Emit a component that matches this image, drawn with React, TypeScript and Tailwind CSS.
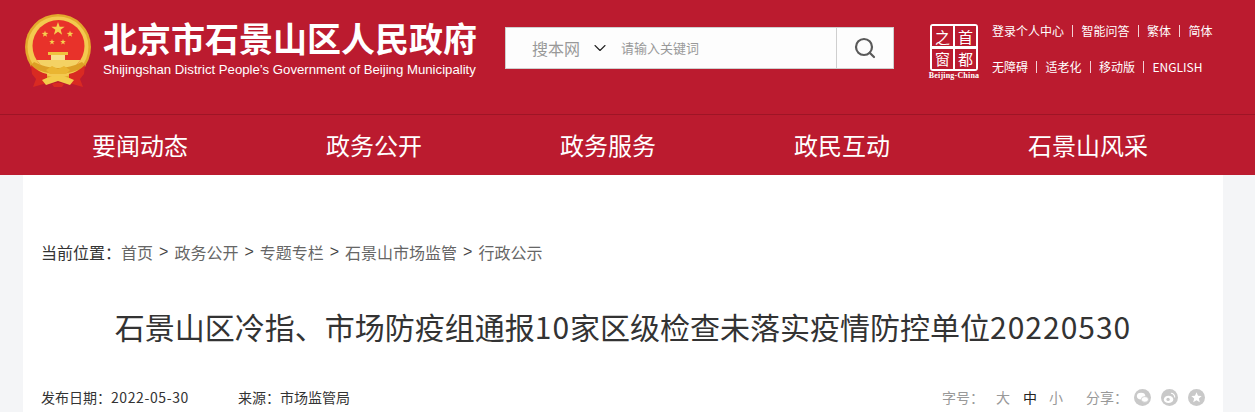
import { ChevronDown, Search } from "lucide-react";

const cjk = { fontFamily: '"Microsoft YaHei", "Noto Sans CJK SC", "Liberation Sans", sans-serif' };

const navItems = ["要闻动态", "政务公开", "政务服务", "政民互动", "石景山风采"];
const crumbs = ["首页", "政务公开", "专题专栏", "石景山市场监管", "行政公示"];

function Star({ x, y, r }: { x: number; y: number; r: number }) {
  const pts = [...Array(10)]
    .map((_, i) => {
      const a = (Math.PI / 5) * i - Math.PI / 2;
      const d = i % 2 === 0 ? r : r * 0.4;
      return `${x + d * Math.cos(a)},${y + d * Math.sin(a)}`;
    })
    .join(" ");
  return <polygon points={pts} fill="#f6cf4e" />;
}

function Emblem() {
  return (
    <svg width="68" height="74" viewBox="0 0 68 74" className="shrink-0">
      <defs>
        <clipPath id="inner">
          <circle cx="34.5" cy="32" r="26" />
        </clipPath>
      </defs>
      <circle cx="34" cy="33" r="33" fill="#e3a92c" />
      <circle cx="34" cy="33" r="30.5" fill="#f3c94f" />
      <circle cx="34.5" cy="32" r="26" fill="#e8322a" />
      <Star x={34} y={15} r={7} />
      <Star x={21} y={20} r={3.5} />
      <Star x={46} y={20} r={3.5} />
      <Star x={28} y={28} r={3} />
      <Star x={39} y={28} r={3} />
      <g clipPath="url(#inner)">
        <rect x="0" y="46" width="68" height="20" fill="#f4d264" />
      </g>
      <rect x="24" y="38" width="20" height="3" fill="#f0c33f" />
      <rect x="27" y="41" width="14" height="5" fill="#f8e08c" />
      <path d="M10 48 Q34 60 58 48 L62 52 Q34 68 6 52 Z" fill="#dd9f25" />
      <path d="M7 51 Q14 58 23 60 L23 69 L9 73 L12 65 L8 60 Z" fill="#d92a22" />
      <path d="M61 51 Q54 58 45 60 L45 69 L59 73 L56 65 L60 60 Z" fill="#d92a22" />
      <path d="M22 56 L28 52 L34 55 L40 52 L46 56 L42 60 L26 60 Z" fill="#eab531" />
      <path d="M18 66 Q34 58 50 66 L46 71 L34 67 L22 71 Z" fill="#f3cb4b" />
      <path d="M28 70 Q34 67 40 70 L38 73 L30 73 Z" fill="#d92a22" />
    </svg>
  );
}

function BeijingLogo() {
  const cell = "flex h-[20px] items-center justify-center overflow-hidden bg-[#bb1b2f] text-[15px] leading-[15px] text-white";
  return (
    <div className="flex w-[54px] shrink-0 flex-col items-center">
      <div className="grid h-[47px] w-[48px] grid-cols-2 grid-rows-2 gap-[2px] rounded-[3px] border-[2px] border-white bg-white">
        <div className={cell}>之</div>
        <div className={cell}>首</div>
        <div className={cell}>窗</div>
        <div className={cell}>都</div>
      </div>
      <div className="whitespace-nowrap text-[8px] font-bold leading-[10px] tracking-[0.2px] text-white" style={{ fontFamily: '"Liberation Serif", serif' }}>
        Beijing-China
      </div>
    </div>
  );
}

function TopLinks({ items }: { items: string[] }) {
  return (
    <div className="flex items-center text-[12px] leading-[16px] text-white">
      {items.map((item, i) => (
        <div key={item} className="flex items-center">
          {i > 0 && <span className="mx-[8.25px] h-[12px] w-px bg-[#f3cfd4]" />}
          <span>{item}</span>
        </div>
      ))}
    </div>
  );
}

export default function App() {
  return (
    <div className="h-[412px] w-[1255px] overflow-hidden bg-[#f4f5f7]" style={cjk}>
      <header className="flex h-[115px] items-start border-b border-[#9e1526] bg-[#bb1b2f]">
        <div className="ml-[24px] mt-[14px]">
          <Emblem />
        </div>
        <div className="ml-[11px] mt-[14px] w-[390px] text-white">
          <div className="whitespace-nowrap text-[34px] font-bold leading-[48px]">北京市石景山区人民政府</div>
          <div className="whitespace-nowrap text-[13.2px] leading-[16px]" style={{ fontFamily: '"Liberation Sans", sans-serif' }}>
            Shijingshan District People’s Government of Beijing Municipality
          </div>
        </div>
        <div className="ml-[12px] mt-[27px] flex h-[42px] w-[389px] border border-[#cfcfcf] bg-[#fdfdfd]">
          <div className="flex flex-1 items-center">
            <span className="ml-[26px] text-[16px] text-[#999999]">搜本网</span>
            <ChevronDown className="ml-[10px] h-[20px] w-[20px] text-[#222222]" strokeWidth={1.3} />
            <span className="ml-[11px] text-[13px] text-[#999999]">请输入关键词</span>
          </div>
          <div className="flex w-[57px] items-center justify-center border-l border-[#cfcfcf]">
            <Search className="h-[24px] w-[24px] text-[#5a5a5a]" strokeWidth={2.2} />
          </div>
        </div>
        <div className="ml-[33px] mt-[24px]">
          <BeijingLogo />
        </div>
        <div className="ml-[11px] mt-[23px] flex flex-col gap-[20px]">
          <TopLinks items={["登录个人中心", "智能问答", "繁体", "简体"]} />
          <TopLinks items={["无障碍", "适老化", "移动版", "ENGLISH"]} />
        </div>
      </header>

      <nav className="flex h-[60px] items-center bg-[#bb1b2f] pl-[23px]">
        {navItems.map((item) => (
          <div key={item} className="w-[234px] whitespace-nowrap pl-[69px] text-[24px] leading-[32px] text-white">
            {item}
          </div>
        ))}
      </nav>

      <main className="ml-[23px] h-[237px] w-[1200px] bg-white px-[18px] pt-[66px]">
        <div className="flex items-center text-[16px] leading-[22px] text-[#666666]">
          <span className="text-[#333333]">当前位置：</span>
          {crumbs.map((c, i) => (
            <div key={c} className="flex items-center">
              {i > 0 && <span className="mx-[6px] text-[#444444]" style={{ fontFamily: '"Liberation Sans", sans-serif' }}>&gt;</span>}
              <span>{c}</span>
            </div>
          ))}
        </div>
        <h1 className="mt-[41px] whitespace-nowrap text-center text-[30px] font-normal leading-[44px] text-[#333333]">
          石景山区冷指、市场防疫组通报<span className="tracking-[1px]">10</span>家区级检查未落实疫情防控单位<span className="tracking-[1px]">20220530</span>
        </h1>
        <div className="mt-[39px] flex items-center text-[14px] leading-[20px] text-[#333333]">
          <span>
            发布日期：<span className="tracking-[0.6px]">2022-05-30</span>
          </span>
          <span className="ml-[49px]">来源：市场监管局</span>
          <div className="ml-auto flex items-center text-[#999999]">
            <span>字号：</span>
            <span className="ml-[12px]">大</span>
            <span className="ml-[13px] text-[#222222]">中</span>
            <span className="ml-[12px]">小</span>
            <span className="ml-[23px]">分享：</span>
            <div className="ml-[6px] flex items-center gap-[10px]">
              <svg width="17" height="17" viewBox="0 0 18 18">
                <circle cx="9" cy="9" r="9" fill="#c9c9c9" />
                <ellipse cx="7.5" cy="7.5" rx="4.5" ry="3.6" fill="#fff" />
                <ellipse cx="11.5" cy="11" rx="3.8" ry="3" fill="#fff" stroke="#c9c9c9" strokeWidth="0.8" />
              </svg>
              <svg width="17" height="17" viewBox="0 0 18 18">
                <circle cx="9" cy="9" r="9" fill="#c9c9c9" />
                <ellipse cx="8" cy="11" rx="5" ry="3.8" fill="#fff" />
                <circle cx="7.5" cy="11" r="1.8" fill="#c9c9c9" />
                <path d="M10.5 4.5 A4 4 0 0 1 14.5 9" fill="none" stroke="#fff" strokeWidth="1.2" />
              </svg>
              <svg width="17" height="17" viewBox="0 0 18 18">
                <circle cx="9" cy="9" r="9" fill="#c9c9c9" />
                <polygon points="9,3.5 10.6,7.2 14.5,7.5 11.5,10 12.5,14 9,11.8 5.5,14 6.5,10 3.5,7.5 7.4,7.2" fill="#fff" />
              </svg>
            </div>
          </div>
        </div>
      </main>
    </div>
  );
}
